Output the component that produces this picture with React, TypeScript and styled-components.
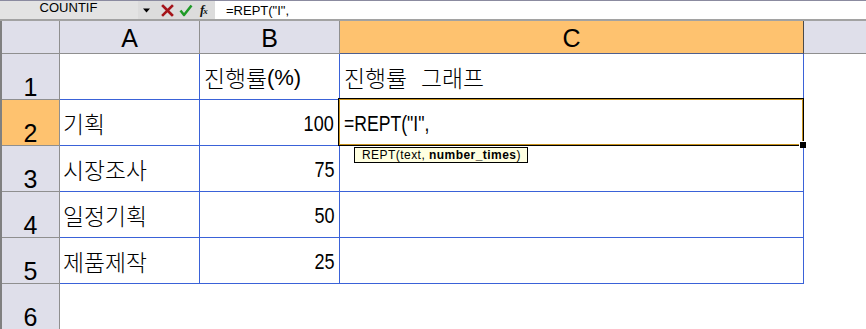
import React from "react";
import styled, { createGlobalStyle, css } from "styled-components";

const Global = createGlobalStyle`
  html, body { margin: 0; padding: 0; background: #ffffff; overflow: hidden; }
  body { font-family: "Liberation Sans", "Noto Sans CJK KR", sans-serif; color: #000; }
  * { box-sizing: border-box; }
`;

const HEADER_BG = "#dfdfea";
const HEADER_LINE = "#8f8f8f";
const SEL_BG = "#fec26f";
const GRID_BLUE = "#3a62d8";

const Window = styled.div`
  width: 866px;
  height: 329px;
  overflow: hidden;
  display: flex;
  flex-direction: column;
`;

const FormulaBar = styled.div`
  height: 21px;
  flex: none;
  display: flex;
  border-top: 1px solid #8b8ba0;
  border-bottom: 2px solid #a2a2a2;
`;

const NameBox = styled.div`
  width: 138px;
  background: #e3e3e3;
  font-size: 13px;
  line-height: 14px;
  text-align: center;
  padding-right: 1px;
`;

const IconStrip = styled.div`
  width: 77px;
  background: #dcdcdc;
  display: flex;
  align-items: center;
`;

const Icon = styled.svg<{ $ml: number }>`
  flex: none;
  margin-left: ${(p) => p.$ml}px;
  display: block;
`;

const Fx = styled.span`
  margin-left: 7px;
  font-family: "Liberation Serif", serif;
  font-style: italic;
  font-weight: bold;
  font-size: 13px;
  line-height: 14px;
  letter-spacing: -1px;
  color: #111;
  & > small {
    font-size: 9px;
    font-weight: bold;
  }
`;

const FormulaInput = styled.div`
  flex: 1;
  background: #ffffff;
  padding: 2px 0 0 11px;
  font-size: 13px;
  line-height: 16px;
`;

const Sheet = styled.div`
  flex: 1;
  display: grid;
  grid-template-columns: 58px 140px 140px 464px 1fr;
  grid-template-rows: 33px repeat(6, 46px);
  border-left: 2px solid #808080;
`;

const HeaderBase = css`
  background: ${HEADER_BG};
  display: flex;
  align-items: flex-end;
  justify-content: center;
  font-family: "Liberation Sans", sans-serif;
  font-size: 25px;
`;

const Corner = styled.div`
  ${HeaderBase};
  border-right: 1px solid ${HEADER_LINE};
  border-bottom: 1px solid ${HEADER_LINE};
`;

const ColHeader = styled.div<{ $selected?: boolean; $last?: boolean }>`
  ${HeaderBase};
  line-height: 25px;
  padding-bottom: 2px;
  border-bottom: 1px solid ${(p) => (p.$selected ? "#4e5f8e" : HEADER_LINE)};
  border-right: ${(p) =>
    p.$last ? "none" : `1px solid ${p.$selected ? "#4a4a4a" : HEADER_LINE}`};
  background: ${(p) => (p.$selected ? SEL_BG : HEADER_BG)};
`;

const RowHeader = styled.div<{ $selected?: boolean }>`
  ${HeaderBase};
  line-height: 24px;
  border-right: 1px solid ${HEADER_LINE};
  border-bottom: 1px solid ${HEADER_LINE};
  background: ${(p) => (p.$selected ? SEL_BG : HEADER_BG)};
`;

const Cell = styled.div<{ $bordered?: boolean; $right?: boolean; $pl?: number }>`
  position: relative;
  display: flex;
  align-items: flex-end;
  justify-content: ${(p) => (p.$right ? "flex-end" : "flex-start")};
  padding: 0 ${(p) => (p.$right ? 5 : 0)}px 10px ${(p) => (p.$right ? 0 : p.$pl ?? 3)}px;
  font-family: "Liberation Sans", "Noto Sans CJK KR", sans-serif;
  font-size: 22px;
  line-height: 22px;
  white-space: nowrap;
  ${(p) =>
    p.$bordered &&
    css`
      border-right: 1px solid ${GRID_BLUE};
      border-bottom: 1px solid ${GRID_BLUE};
    `}
`;

const Hangul = styled.span`
  font-family: "Noto Sans CJK KR", sans-serif;
  font-weight: 300;
  font-size: 22.8px;
  word-spacing: 9px;
`;

const Latin = styled.span<{ $origin: "left" | "right"; $scale: number }>`
  display: inline-block;
  transform: scaleX(${(p) => p.$scale});
  transform-origin: ${(p) => p.$origin} bottom;
`;

const ActiveCell = styled(Cell)`
  z-index: 2;
  &::after {
    content: "";
    position: absolute;
    top: -2px;
    left: -2px;
    right: -1px;
    bottom: -1px;
    border: 1px solid #000;
    box-shadow: inset 0 0 0 1px #c8921c;
    pointer-events: none;
  }
  &::before {
    content: "";
    position: absolute;
    right: -3px;
    bottom: -3px;
    width: 6px;
    height: 6px;
    background: #000;
    border-left: 1px solid #fff;
    border-top: 1px solid #fff;
    z-index: 3;
  }
`;

const Tooltip = styled.div`
  position: absolute;
  left: 14px;
  top: 47px;
  height: 16px;
  padding: 0 6px 0 7px;
  background: #ffffe1;
  border: 1px solid #000;
  font-family: "Liberation Sans", sans-serif;
  font-size: 12px;
  line-height: 14px;
  letter-spacing: 0.45px;
  white-space: nowrap;
  & > b { font-weight: bold; }
`;

type Row = { n: number; a?: string; b?: string; c?: string; bRight?: boolean };

const rows: Row[] = [
  { n: 1, b: "진행률(%)", c: "진행률 그래프" },
  { n: 2, a: "기획", b: "100", bRight: true },
  { n: 3, a: "시장조사", b: "75", bRight: true },
  { n: 4, a: "일정기획", b: "50", bRight: true },
  { n: 5, a: "제품제작", b: "25", bRight: true },
];

function renderText(t?: string, right = false) {
  if (!t) return null;
  const parts = t.split(/([\uAC00-\uD7A3][\uAC00-\uD7A3 ]*)/).filter(Boolean);
  return parts.map((p, i) =>
    /[\uAC00-\uD7A3]/.test(p) ? (
      <Hangul key={i}>{p}</Hangul>
    ) : (
      <Latin key={i} $origin={right ? "right" : "left"} $scale={/^\d+$/.test(p) ? 0.82 : 1}>
        {p}
      </Latin>
    )
  );
}

export default function App() {
  return (
    <Window>
      <Global />
      <FormulaBar>
        <NameBox>COUNTIF</NameBox>
        <IconStrip>
          <Icon $ml={5} width="8" height="5" viewBox="0 0 8 5">
            <path d="M0 0.5 H7 L3.5 4.5 Z" fill="#000" />
          </Icon>
          <Icon $ml={10} width="13" height="13" viewBox="0 0 13 13">
            <path d="M2 2 L11 11 M11 2 L2 11" stroke="#a5141a" strokeWidth="2.6" strokeLinecap="square" />
          </Icon>
          <Icon $ml={5} width="14" height="13" viewBox="0 0 14 13">
            <path d="M1.5 6.5 L5 11 L12.5 1.5" stroke="#1e9a26" strokeWidth="2.5" fill="none" strokeLinejoin="round" />
          </Icon>
          <Fx>
            f<small>x</small>
          </Fx>
        </IconStrip>
        <FormulaInput>=REPT("I",</FormulaInput>
      </FormulaBar>
      <Sheet>
        <Corner />
        <ColHeader>A</ColHeader>
        <ColHeader>B</ColHeader>
        <ColHeader $selected>C</ColHeader>
        <ColHeader $last />
        {rows.map((r) => (
          <React.Fragment key={r.n}>
            <RowHeader $selected={r.n === 2}>{r.n}</RowHeader>
            <Cell $bordered>{renderText(r.a)}</Cell>
            <Cell $bordered $right={r.bRight} $pl={4}>
              {renderText(r.b, r.bRight)}
            </Cell>
            {r.n === 2 ? (
              <ActiveCell $bordered $pl={4}>
                <Latin $origin="left" $scale={0.8}>=REPT("I",</Latin>
                <Tooltip>
                  REPT(text, <b>number_times</b>)
                </Tooltip>
              </ActiveCell>
            ) : (
              <Cell $bordered $pl={4}>{renderText(r.c)}</Cell>
            )}
            <Cell />
          </React.Fragment>
        ))}
        <RowHeader>6</RowHeader>
        <Cell />
        <Cell />
        <Cell />
        <Cell />
      </Sheet>
    </Window>
  );
}
